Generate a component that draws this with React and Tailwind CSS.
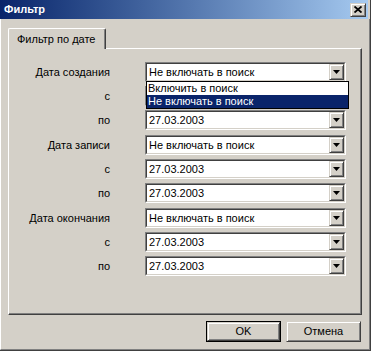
import React from 'react';

const FONT = { fontFamily: '"Liberation Sans", Arial, sans-serif' };

// Raised 3D edge (buttons, dropdown arrows)
const raised =
  'border border-t-[#d4d0c8] border-l-[#d4d0c8] border-r-[#404040] border-b-[#404040] shadow-[inset_1px_1px_0_#ffffff,inset_-1px_-1px_0_#808080]';

const Arrow = () => (
  <div className={`w-[15px] h-full bg-[#d4d0c8] flex items-center justify-center ${raised}`}>
    <svg width="7" height="4" viewBox="0 0 7 4">
      <polygon points="0,0 7,0 3.5,4" fill="#000" />
    </svg>
  </div>
);

const Combo = ({ value, children }) => (
  <div className="relative w-[201px] h-[20px] border border-t-[#808080] border-l-[#808080] border-r-white border-b-white">
    <div className="h-full border border-t-[#404040] border-l-[#404040] border-r-[#d4d0c8] border-b-[#d4d0c8] bg-white flex items-center">
      <span className="flex-1 pl-[2px] text-[11px] text-black leading-none">{value}</span>
      <Arrow />
    </div>
    {children}
  </div>
);

const Row = ({ label, value, children }) => (
  <div className="flex items-center h-[20px]">
    <div className="w-[101px] text-right text-[11px] text-black">{label}</div>
    <div className="ml-[35px]">
      <Combo value={value}>{children}</Combo>
    </div>
  </div>
);

const GROUPS = [
  { title: 'Дата создания', open: true },
  { title: 'Дата записи' },
  { title: 'Дата окончания' },
];

const DATE = '27.03.2003';
const SKIP = 'Не включать в поиск';

const Btn = ({ children, primary }) => (
  <div className={`w-[75px] h-[21px] ${primary ? 'border border-black' : ''}`}>
    <div className={`w-full h-full bg-[#d4d0c8] flex items-center justify-center text-[11px] text-black ${raised}`}>
      {children}
    </div>
  </div>
);

export default function App() {
  return (
    <div style={FONT} className="w-[371px] h-[351px] bg-[#d4d0c8] flex flex-col border-r border-b border-[#404040]">
      {/* Title bar */}
      <div className="h-[19px] w-[368px] bg-linear-to-r from-[#0a246a] to-[#a6caf0] flex items-center justify-between pl-[4px] pr-[2px]">
        <span className="text-white font-bold text-[11px]">Фильтр</span>
        <div className={`w-[16px] h-[14px] bg-[#d4d0c8] flex items-center justify-center ${raised}`}>
          <svg width="8" height="7" viewBox="0 0 8 7">
            <path d="M0.5 0.5 L7.5 6.5 M7.5 0.5 L0.5 6.5" stroke="#000" strokeWidth="1.8" />
          </svg>
        </div>
      </div>

      <div className="flex-1 border-l border-l-white border-r border-r-[#808080] border-b border-b-[#808080] pt-[9px] pl-[7px]">
        {/* Tab */}
        <div className="relative z-10 w-[98px] h-[21px] -mb-px bg-[#d4d0c8] border-t border-l border-white border-r border-r-[#404040] rounded-t-[2px] shadow-[inset_-1px_0_0_#808080] flex items-center pl-[8px]">
          <span className="text-[11px] text-black">Фильтр по дате</span>
        </div>

        {/* Tab panel */}
        <div className="w-[354px] h-[267px] border border-t-white border-l-white border-r-[#404040] border-b-[#404040] shadow-[inset_-1px_-1px_0_#808080] pt-[13px] flex flex-col gap-[5px]">
          {GROUPS.map((g) => (
            <div key={g.title} className="flex flex-col gap-[4px]">
              <Row label={g.title} value={SKIP}>
                {g.open && (
                  <div className="absolute left-0 top-full z-20 w-[203px] border border-black bg-white text-[11px] text-black">
                    <div className="h-[13px] leading-[13px] pl-[1px]">Включить в поиск</div>
                    <div className="h-[13px] leading-[13px] pl-[1px] bg-[#0a246a] text-white">Не включать в поиск</div>
                  </div>
                )}
              </Row>
              {/* the open list hides this combo's value */}
              <Row label="с" value={g.open ? '' : DATE} />
              <Row label="по" value={DATE} />
            </div>
          ))}
        </div>

        {/* Buttons */}
        <div className="w-[354px] flex justify-end gap-[5px] mt-[6px] pr-px">
          <Btn primary>OK</Btn>
          <Btn>Отмена</Btn>
        </div>
      </div>
    </div>
  );
}
